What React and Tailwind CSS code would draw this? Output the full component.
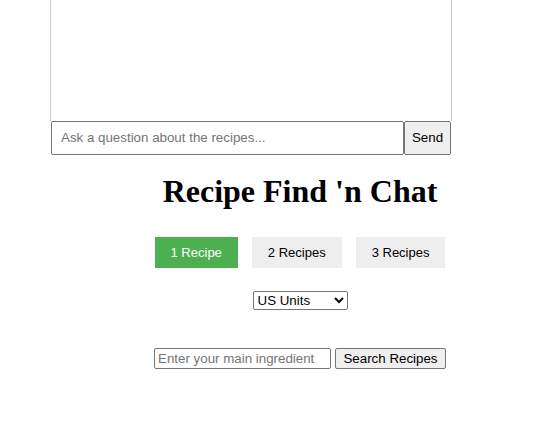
import React from 'react';

function ChatBox() {
  return (
    <div className="ml-[50px] w-[402px]">
      <div className="h-[121px] border-x border-[#ccc]" />
      <div className="ml-px flex h-[34px] w-[400px]">
        <input
          type="text"
          placeholder="Ask a question about the recipes..."
          className="min-w-0 flex-1 rounded-[2px] border border-[#767676] bg-white px-[9px] text-[13.33px] text-black outline-none placeholder:text-[#757575]"
        />
        <button className="w-[47px] rounded-[2px] border border-[#767676] bg-[#efefef] text-[13.33px] text-black">
          Send
        </button>
      </div>
    </div>
  );
}

export default function App() {
  const counts = ['1 Recipe', '2 Recipes', '3 Recipes'];

  return (
    <div className="min-h-screen bg-white font-['Liberation_Sans',Arial,sans-serif] text-black">
      <ChatBox />

      <div className="flex flex-col items-center pl-[67px]">
        <h1 className="mt-[18px] h-[36px] font-['Liberation_Serif','Times_New_Roman',serif] text-[32px] leading-[36px] font-bold">
          Recipe Find 'n Chat
        </h1>

        <div className="mt-[28px] flex gap-[14px]">
          {counts.map((label, i) => (
            <button
              key={label}
              className={
                i === 0
                  ? 'h-[31px] bg-[#4caf50] px-4 text-[13px] text-white'
                  : 'h-[31px] bg-[#eeeeee] px-4 text-[13px] text-black'
              }
            >
              {label}
            </button>
          ))}
        </div>

        <select className="mt-[23px] h-[19px] w-[95px] rounded-[2px] border border-[#767676] bg-white text-[13.33px] leading-[15px]">
          <option>US Units</option>
          <option>Metric Units</option>
        </select>

        <div className="mt-[38px] flex gap-[4px]">
          <input
            type="text"
            placeholder="Enter your main ingredient"
            className="h-[21px] w-[177px] rounded-[2px] border border-[#767676] bg-white px-[3px] text-[13.33px] outline-none placeholder:text-[#757575]"
          />
          <button className="h-[21px] w-[111px] rounded-[2px] border border-[#767676] bg-[#efefef] text-[13.33px]">
            Search Recipes
          </button>
        </div>
      </div>
    </div>
  );
}
